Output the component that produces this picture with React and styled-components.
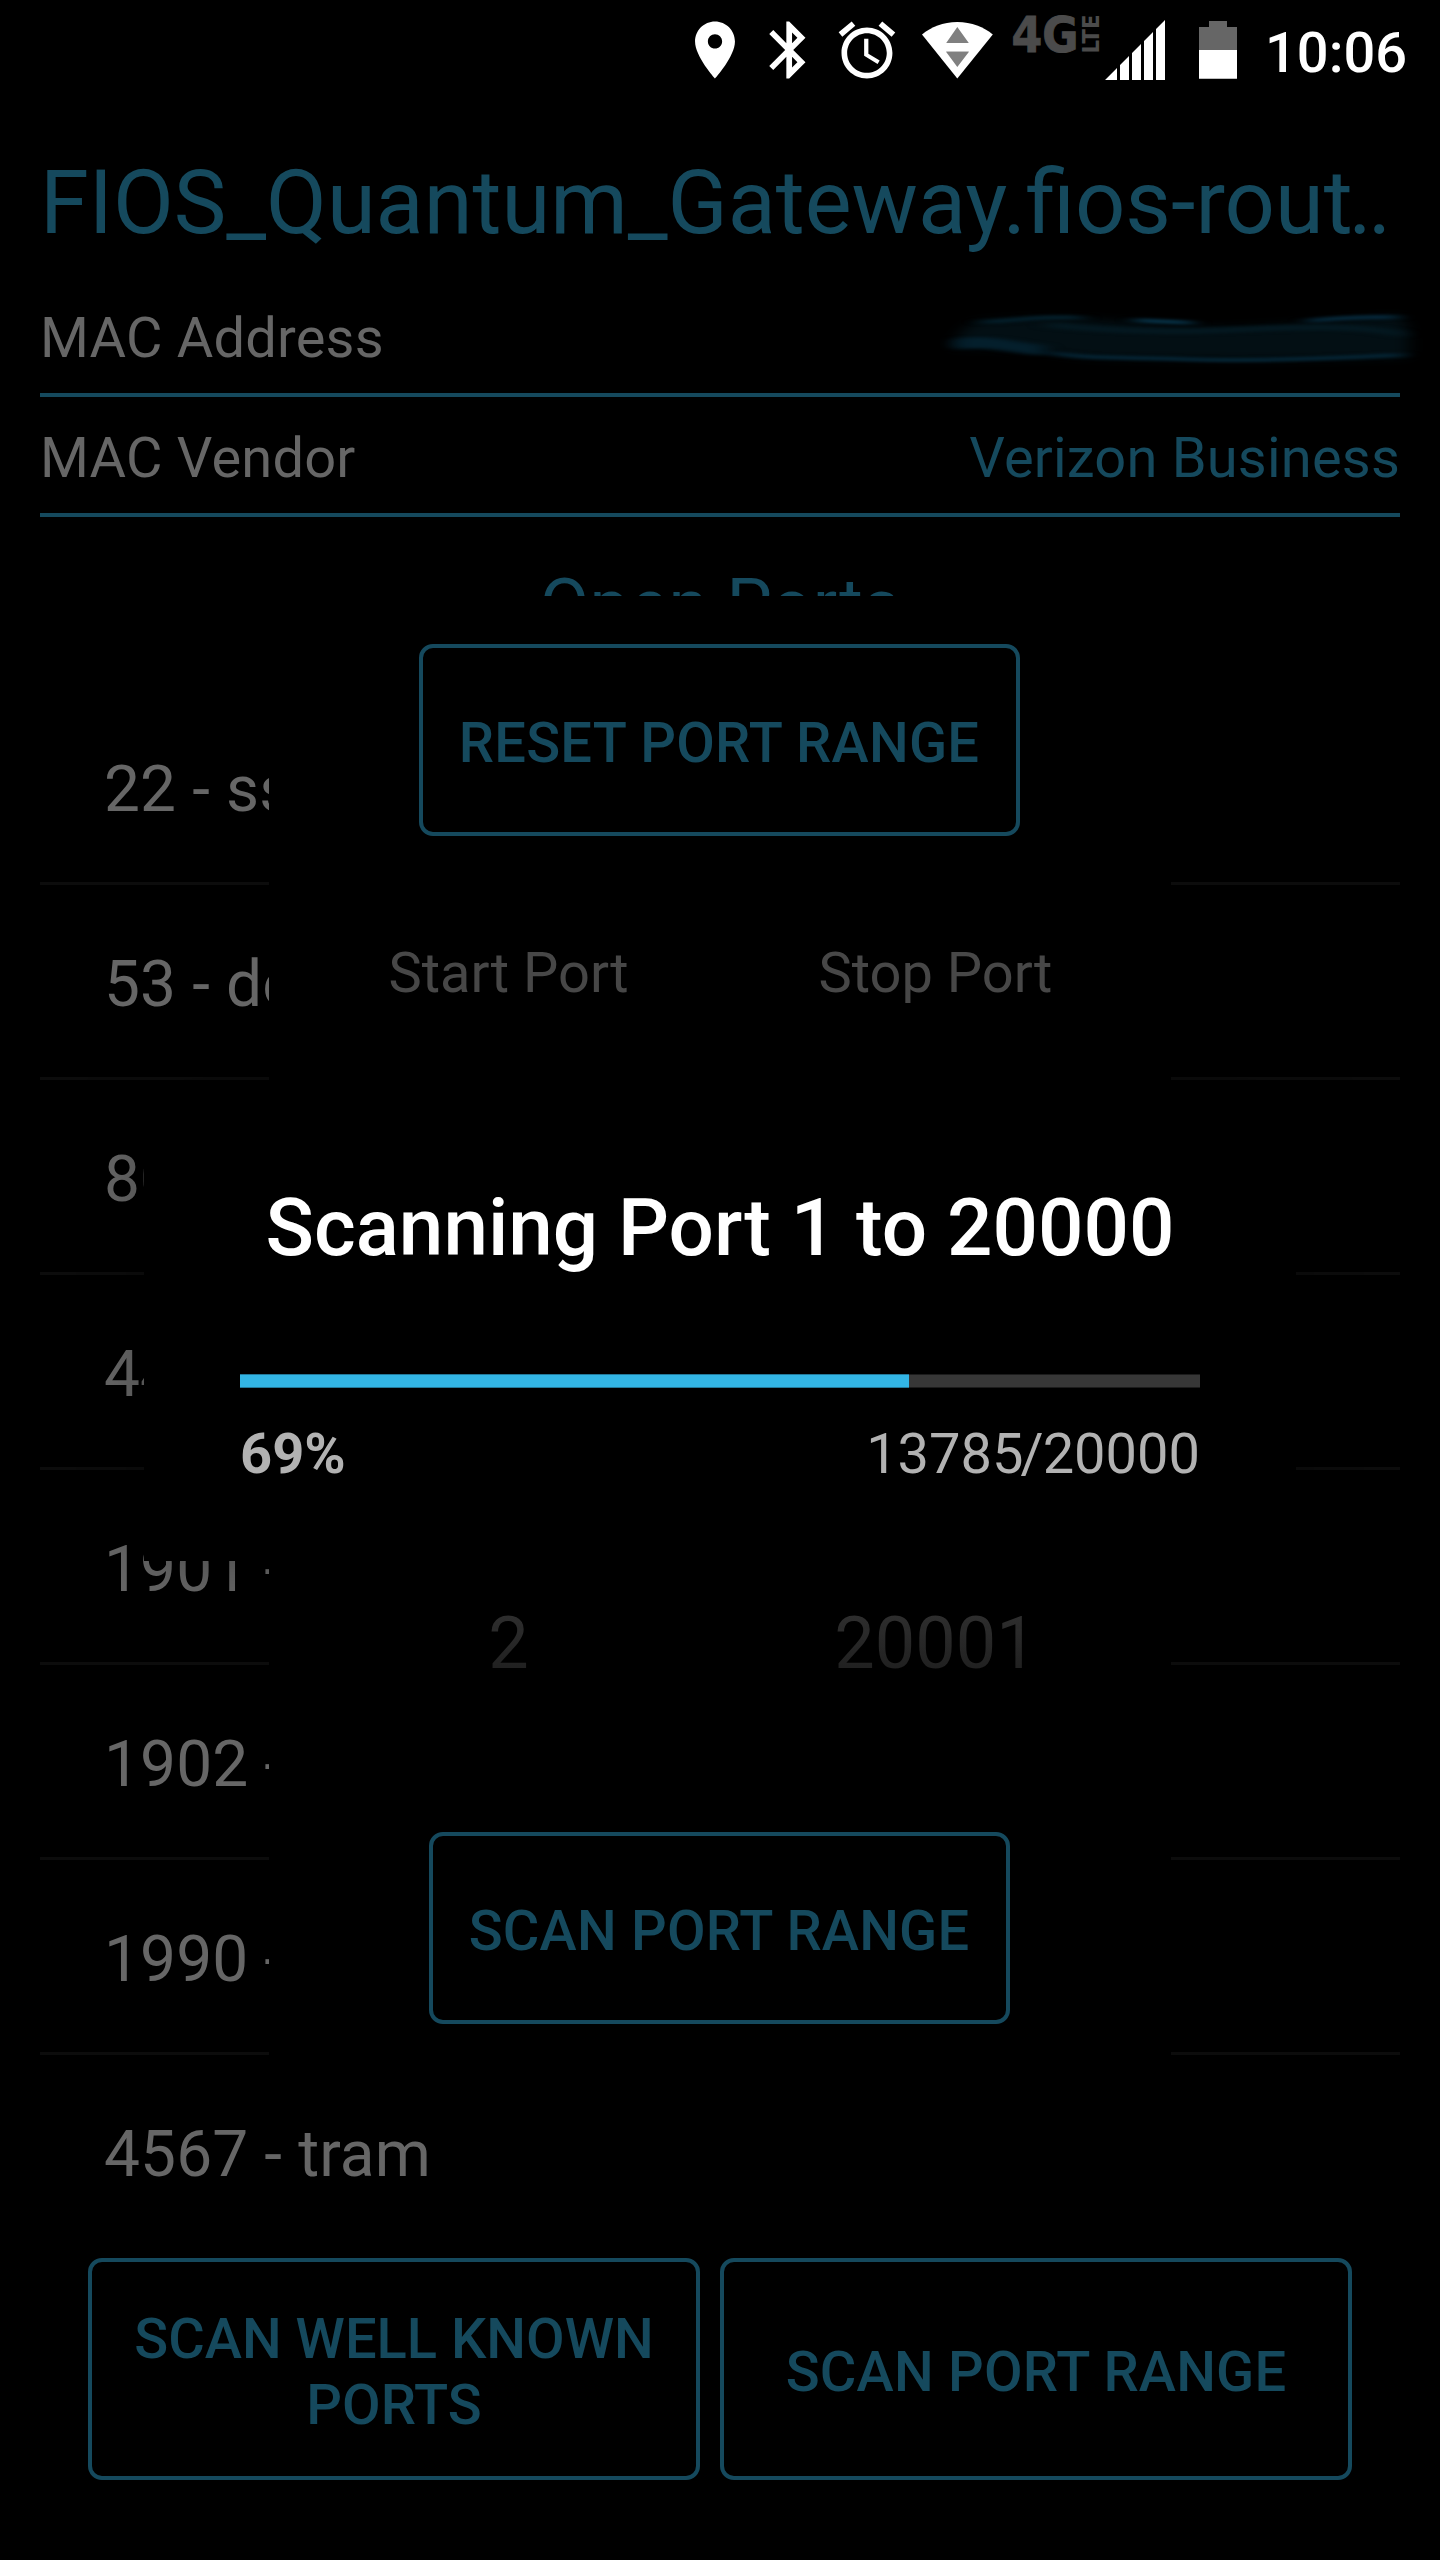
import React from "react";
import styled, { createGlobalStyle } from "styled-components";

const TEAL = "#15495d";

const GlobalStyle = createGlobalStyle`
  * { box-sizing: border-box; }
  html, body { margin: 0; background: #000; }
  body { font-family: Roboto, "Liberation Sans", sans-serif; }
`;

const Screen = styled.div`
  position: relative;
  width: 1440px;
  height: 2560px;
  overflow: hidden;
  background: #000;
  display: flex;
  flex-direction: column;
`;

const StatusBar = styled.header`
  height: 96px;
  flex: none;
  display: flex;
  align-items: flex-start;
  justify-content: flex-end;
  padding-right: 34px;
`;

const Glyph = styled.svg`
  display: block;
  flex: none;
  width: ${(p) => p.$w}px;
  height: 96px;
  margin-right: ${(p) => p.$gap || 0}px;
  overflow: visible;
`;

const Clock = styled.time`
  width: 141px;
  font-size: 56px;
  font-weight: 500;
  line-height: 106px;
  color: #fff;
  white-space: nowrap;
`;

const HostName = styled.h1`
  margin: 0;
  height: 181px;
  flex: none;
  padding: 33px 40px 0;
  font-size: 88.4px;
  font-weight: 400;
  line-height: 148px;
  color: ${TEAL};
  white-space: nowrap;
`;

const Dots = styled.span`
  margin-left: -4px;
  letter-spacing: -4px;
`;

const InfoRow = styled.div`
  display: flex;
  justify-content: space-between;
  height: 120px;
  flex: none;
  margin: 0 40px;
  padding-top: 6px;
  border-bottom: 4px solid ${TEAL};
  font-size: 56px;
  line-height: 110px;
  letter-spacing: 0.2px;
  white-space: nowrap;
`;

const InfoLabel = styled.span`
  color: #666;
`;

const InfoValue = styled.span`
  color: ${TEAL};
`;

const Smudge = styled.svg`
  display: block;
  width: 500px;
  height: 110px;
  margin-right: -40px;
`;

const SectionTitle = styled.h2`
  margin: 0;
  height: 173px;
  flex: none;
  padding-top: 4px;
  font-size: 72px;
  font-weight: 400;
  line-height: 169px;
  letter-spacing: 0.2px;
  text-align: center;
  color: ${TEAL};
`;

const PortList = styled.ul`
  list-style: none;
  margin: 0 40px;
  padding: 0;
  flex: none;
`;

const PortRow = styled.li`
  height: 195px;
  padding: 7px 64px 0;
  border-bottom: 3px solid #0c0c0c;
  font-size: 64px;
  line-height: 186px;
  letter-spacing: 0.12px;
  color: #666;
  white-space: nowrap;
  &:last-child {
    height: 192px;
    border-bottom: 0;
  }
`;

const Actions = styled.footer`
  display: flex;
  gap: 20px;
  padding: 11px 88px 0;
`;

const OutlineButton = styled.button`
  display: flex;
  align-items: center;
  justify-content: center;
  flex: none;
  width: ${(p) => p.$w}px;
  height: ${(p) => p.$h || 192}px;
  margin: 0;
  padding: 6px 0 0;
  border: 4px solid ${TEAL};
  border-radius: 14px;
  background: transparent;
  font: 500 56px/66px Roboto, "Liberation Sans", sans-serif;
  letter-spacing: ${(p) => p.$tracking || 0}px;
  color: ${TEAL};
  text-align: center;
  white-space: pre-line;
`;

const Scrim = styled.div`
  position: absolute;
  inset: 96px 0 0;
  display: flex;
  align-items: center;
  justify-content: center;
`;

const RangeDialog = styled.section`
  width: 902px;
  height: 1464px;
  padding: 48px 2px 0 0;
  background: #000;
  display: flex;
  flex-direction: column;
  align-items: center;
`;

const PickerGroup = styled.div`
  display: grid;
  grid-template-columns: 427px 427px;
  padding-left: 6px;
  text-align: center;
`;

const PickerLabel = styled.div`
  font-size: 56px;
  line-height: 274px;
  color: #474747;
`;

const PickerNext = styled.div`
  height: 722px;
  padding-top: 345px;
  font-size: 72px;
  line-height: 377px;
  color: transparent;
  background: linear-gradient(#303030 500px, #202020 560px);
  -webkit-background-clip: text;
  background-clip: text;
`;

const ProgressDialog = styled.section`
  width: 1152px;
  height: 466px;
  padding: 0 96px;
  background: #000;
  box-shadow: 0 0 60px rgba(0, 0, 0, 0.3);
`;

const ProgressTitle = styled.h2`
  margin: 0 0 12px;
  font-size: 80px;
  font-weight: 500;
  line-height: 267px;
  text-align: center;
  color: #fff;
  white-space: nowrap;
`;

const Track = styled.div`
  height: 14px;
  background: linear-gradient(#1c1c1c 1px, #373737 1px 13px, #1c1c1c 13px);
`;

const Fill = styled.div`
  height: 14px;
  background: linear-gradient(#23799a 1px, #33b5e5 1px 13px, #23799a 13px);
`;

const Counts = styled.div`
  display: flex;
  justify-content: space-between;
  font-size: 56px;
  line-height: 132px;
  color: #b2b2b2;
`;

const Slash = styled.span`
  margin: 0 -1px 0 -3px;
`;

const PORTS = [
  "22 - ssh",
  "53 - domain",
  "80 - http",
  "443 - https",
  "1901 - fjicl-tep-a",
  "1902 - fjicl-tep-b",
  "1990 - stun-p1",
  "4567 - tram",
];

const SCANNED = 13785;
const TOTAL = 20000;
const percent = (SCANNED / TOTAL) * 100;

function StatusIcons() {
  return (
    <>
      <Glyph $w={40} $gap={34} viewBox="695 0 40 96">
        <path
          transform="translate(680.8 15.8) scale(2.85)"
          fill="#fff"
          d="M12 2C8.13 2 5 5.13 5 9c0 5.25 7 13 7 13s7-7.75 7-13c0-3.87-3.13-7-7-7zm0 9.5c-1.38 0-2.5-1.12-2.5-2.5s1.12-2.5 2.5-2.5 2.5 1.12 2.5 2.5-1.12 2.5-2.5 2.5z"
        />
      </Glyph>
      <Glyph $w={37} $gap={33} viewBox="769 0 37 96">
        <path
          transform="translate(755 15.8) scale(2.85)"
          fill="#fff"
          d="M17.71 7.71L12 2h-1v7.59L6.41 5 5 6.41 10.59 12 5 17.59 6.41 19 11 14.41V22h1l5.71-5.71-4.3-4.29 4.3-4.29zM13 5.83l1.88 1.88L13 9.59V5.83zm1.88 10.46L13 18.17v-3.76l1.88 1.88z"
        />
      </Glyph>
      <Glyph $w={56} $gap={26} viewBox="839 0 56 96">
        <path
          transform="translate(833 16.2) scale(2.83)"
          fill="#fff"
          d="M22 5.72l-4.6-3.86-1.29 1.53 4.6 3.86L22 5.72zM7.88 3.39L6.6 1.86 2 5.71l1.29 1.53 4.59-3.85zM12.5 8H11v6l4.75 2.85.75-1.23-4-2.37V8zM12 4c-4.97 0-9 4.03-9 9s4.02 9 9 9c4.97 0 9-4.03 9-9s-4.03-9-9-9zm0 16c-3.87 0-7-3.13-7-7s3.13-7 7-7 7 3.13 7 7-3.13 7-7 7z"
        />
      </Glyph>
      <Glyph $w={72} $gap={19} viewBox="921 0 72 96">
        <path fill="#fff" d="M922 34.5C931 27 943 22 957.3 22S984 27 992.8 34.5L957.3 78.5z" />
        <path fill="#808080" d="M957.3 27L968.8 43H946.2zM946.2 52H968.8L957.3 67z" />
        <path fill="#c4c4c4" d="M946.2 51H968.8V52H946.2z" />
      </Glyph>
      <Glyph $w={87} $gap={6} viewBox="1012 0 87 96">
        <text
          x="1011.5"
          y="52"
          textLength="67"
          lengthAdjust="spacingAndGlyphs"
          fontFamily="'DejaVu Sans', sans-serif"
          fontWeight="700"
          fontSize="50"
          fill="#4b4b4b"
          stroke="#4b4b4b"
          strokeWidth="1"
        >
          4G
        </text>
        <text
          transform="translate(1098.5 53.5) rotate(-90)"
          textLength="39"
          lengthAdjust="spacingAndGlyphs"
          fontFamily="'DejaVu Sans', sans-serif"
          fontWeight="700"
          fontSize="23.5"
          fill="#4b4b4b"
        >
          LTE
        </text>
      </Glyph>
      <Glyph $w={60} $gap={34} viewBox="1105 0 60 96">
        <path
          fill="#fff"
          d="M1105 80L1117 68V80zM1120 80V65L1129 56V80zM1132 80V53L1141 44V80zM1144 80V41L1153 32V80zM1156 80V29L1165 20V80z"
        />
      </Glyph>
      <Glyph $w={38} $gap={28} viewBox="1199 0 38 96">
        <path fill="#666" d="M1209 21H1227V27H1237V50H1199V27H1209z" />
        <path fill="#fff" d="M1199 50H1237V78.7H1199z" />
      </Glyph>
    </>
  );
}

function ScribbledValue() {
  return (
    <Smudge viewBox="940 283 500 110">
      <defs>
        <filter id="soft" x="-10%" y="-40%" width="120%" height="180%" colorInterpolationFilters="sRGB">
          <feGaussianBlur stdDeviation="8 4" />
        </filter>
        <filter id="fine" x="-10%" y="-20%" width="120%" height="140%" colorInterpolationFilters="sRGB">
          <feGaussianBlur stdDeviation="9 1.8" />
        </filter>
      </defs>
      <path
        filter="url(#soft)"
        fill="#030f14"
        d="M952 348C957 335 967 322 984 321C1010 320 1035 317 1060 318C1120 320 1180 329 1240 327C1300 325 1350 317 1400 316C1410 325 1410 345 1408 357C1340 360 1180 361 1085 357C1050 353 1020 347 952 348z"
      />
      <g filter="url(#fine)" fill="none" strokeLinecap="round">
        <path stroke="#041f2c" strokeWidth="11" d="M960 344C985 339 1010 347 1040 350" />
        <path stroke="#052535" strokeWidth="4" d="M1055 353C1085 359 1130 357 1180 359S1300 360 1400 355" />
        <path stroke="#073348" strokeWidth="4" d="M1137 320C1155 322 1170 321 1190 323" />
        <path stroke="#04202c" strokeWidth="4" d="M984 322C1020 320 1055 315 1080 318" />
        <path stroke="#06293c" strokeWidth="4" d="M1310 321C1335 318 1360 317 1395 317" />
        <path stroke="#041820" strokeWidth="6" d="M1050 325C1100 330 1160 333 1230 330S1360 325 1400 334" />
      </g>
    </Smudge>
  );
}

export default function App() {
  return (
    <>
      <GlobalStyle />
      <Screen>
        <StatusBar>
          <StatusIcons />
          <Clock>10:06</Clock>
        </StatusBar>
        <HostName>
          FIOS_Quantum_Gateway.fios-rout<Dots>..</Dots>
        </HostName>
        <InfoRow>
          <InfoLabel>MAC Address</InfoLabel>
          <ScribbledValue />
        </InfoRow>
        <InfoRow>
          <InfoLabel>MAC Vendor</InfoLabel>
          <InfoValue>Verizon Business</InfoValue>
        </InfoRow>
        <SectionTitle>Open Ports</SectionTitle>
        <PortList>
          {PORTS.map((port) => (
            <PortRow key={port}>{port}</PortRow>
          ))}
        </PortList>
        <Actions>
          <OutlineButton $w={612} $h={222}>{"SCAN WELL KNOWN\nPORTS"}</OutlineButton>
          <OutlineButton $w={632} $h={222} $tracking={0.2}>SCAN PORT RANGE</OutlineButton>
        </Actions>

        <Scrim>
          <RangeDialog>
            <OutlineButton $w={601} $tracking={0.28}>RESET PORT RANGE</OutlineButton>
            <PickerGroup>
              <PickerLabel>Start Port</PickerLabel>
              <PickerLabel>Stop Port</PickerLabel>
              <PickerNext>2</PickerNext>
              <PickerNext>20001</PickerNext>
            </PickerGroup>
            <OutlineButton $w={581} $tracking={0.2}>SCAN PORT RANGE</OutlineButton>
          </RangeDialog>
        </Scrim>

        <Scrim>
          <ProgressDialog>
            <ProgressTitle>Scanning Port 1 to 20000</ProgressTitle>
            <Track>
              <Fill style={{ width: `${percent + 0.8}%` }} />
            </Track>
            <Counts>
              <b>{Math.round(percent)}%</b>
              <span>
                {SCANNED}
                <Slash>/</Slash>
                {TOTAL}
              </span>
            </Counts>
          </ProgressDialog>
        </Scrim>
      </Screen>
    </>
  );
}
